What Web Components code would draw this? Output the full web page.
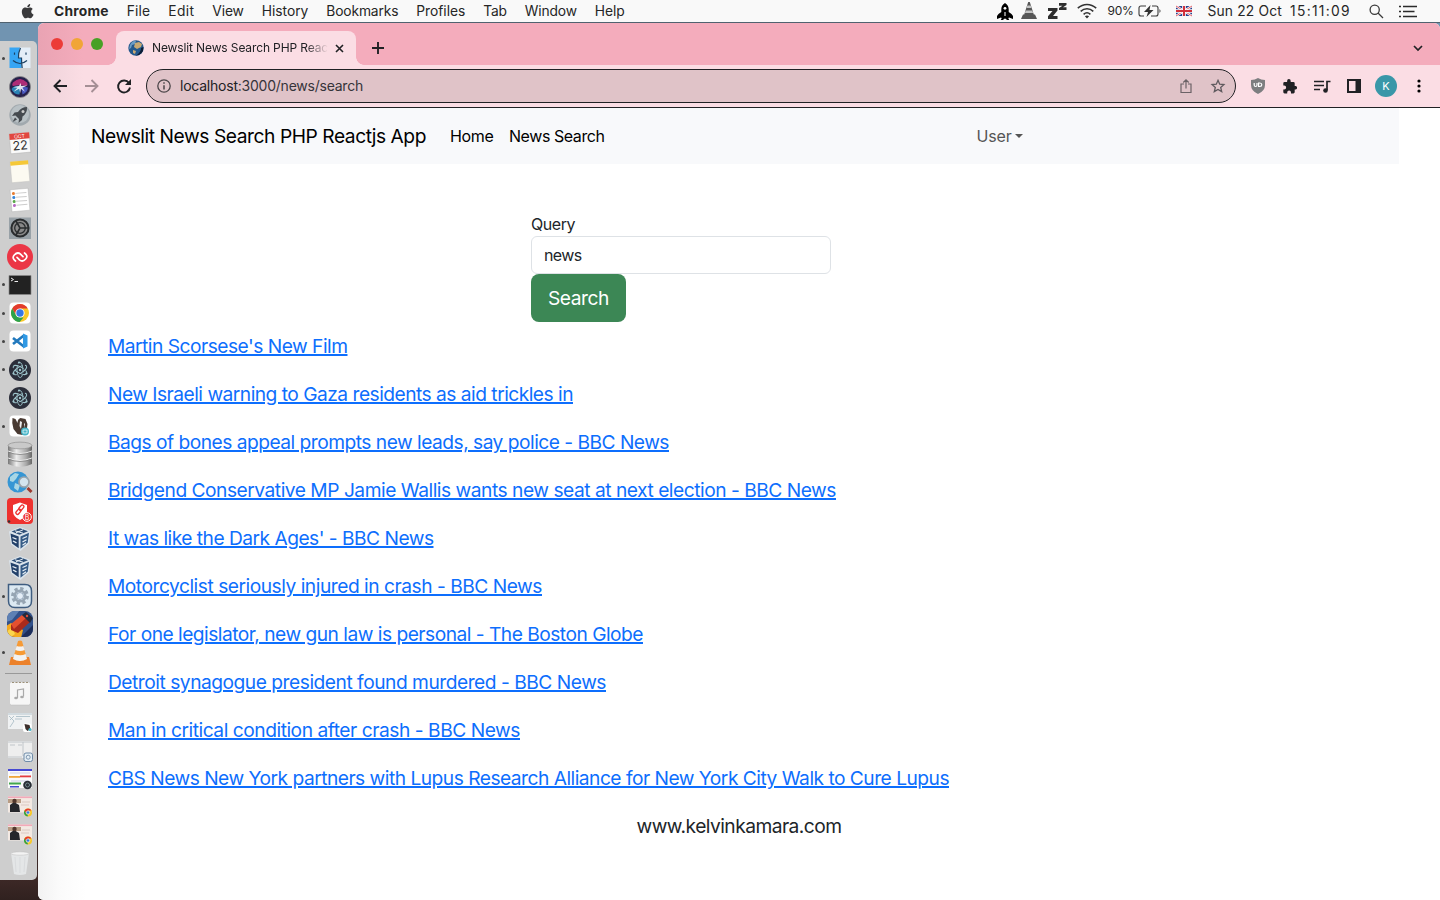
<!DOCTYPE html>
<html lang="en">
<head>
<meta charset="utf-8">
<title>Newslit News Search PHP Reactjs App</title>
<style>
html,body{margin:0;height:100%;overflow:hidden}
body{font-family:Inter,"Liberation Sans",sans-serif;color:#212529;background:#fff}
</style>
</head>
<body>
<desk-top></desk-top>
<script>
const ART = {
 apple:`<path fill="#3a3a3c" d="M11.2 8.5c0-1.7 1.4-2.5 1.5-2.6-.8-1.2-2.1-1.4-2.5-1.4-1.1-.1-2.1.6-2.6.6s-1.400-.6-2.300-.6C4.100 4.500 3 5.200 2.400 6.200c-1.300 2.200-.3 5.500.9 7.300.6.900 1.300 1.900 2.300 1.800.9 0 1.300-.6 2.400-.6s1.400.6 2.400.6 1.600-.9 2.200-1.700c.7-1 1-2 1-2-.1-.1-2.400-.9-2.400-3.100zM9.500 3.400c.5-.6.8-1.500.7-2.400-.7 0-1.600.5-2.100 1.100-.5.500-.9 1.400-.8 2.200.8.100 1.700-.4 2.200-.9z"/>`,
 rocket:`<path fill="#000" d="M8 0C5 1.800 4.300 4 4.300 6.500V9L1.500 11 0 13v3l4-1.500.7.800-1 1.700h2.500l.8-1.300h2l.8 1.300h2.500l-1-1.700.7-.8L16 16v-3l-1.500-2-2.800-2V6.500C11.700 4 11 1.800 8 0z"/><circle cx="8" cy="5.300" r="1.400" fill="#fff"/><rect x="7.400" y="9" width="1.200" height="4" fill="#ddd"/>`,
 cone:`<path fill="#565656" d="M7.200 0h1.600l4 12.500H14l2 4.500H0l2-4.500h1.200z"/><path fill="#c4c4c4" d="M6.300 3.500h3.400l.8 2.500h-5zM4.700 8.500h6.600l.8 2.500H3.900z"/>`,
 zzz:`<path fill="#2e2e2e" d="M0 5h9.500v2.600L5 13h4.500v3H0v-2.700L4.500 8H0zM11 0h7.500v2L15 4.300h3.500V7H11V5l3.500-2.300H11z"/>`,
 wifi:`<g fill="none" stroke="#333" stroke-width="1.600"><path d="M.8 5.200c5.400-5 13-5 18.400 0M3.700 8.300c3.700-3.400 8.900-3.400 12.600 0M6.600 11.300c2-1.800 4.800-1.800 6.800 0"/></g><path fill="#333" d="m7.900 13.300 2.100 2.200 2.100-2.200c-1.200-1-3-1-4.200 0z"/>`,
 battery:`<path d="M8 1H3Q1 1 1 3v6q0 2 2 2h3M14 1h4q2 0 2 2v6q0 2-2 2h-5" fill="none" stroke="#3a3a3a" stroke-width="1.100"/><path d="M12.500 0 6 7h4L8.500 12 15.500 5h-4z" fill="#333"/><path d="M21.500 4q2 2 0 4z" fill="#333"/>`,
 flag:`<path fill="#27408c" d="M0 0h16v10H0z"/><path stroke="#fff" stroke-width="2.200" d="m0 0 16 10M16 0 0 10"/><path stroke="#d8343f" stroke-width=".8" d="m0 0 16 10M16 0 0 10"/><path stroke="#fff" stroke-width="3.600" d="M8 0v10M0 5h16"/><path stroke="#d22f3a" stroke-width="2" d="M8 0v10M0 5h16"/>`,
 search:`<g fill="none" stroke="#3a3a3a" stroke-width="1.300"><circle cx="5.700" cy="5.700" r="4.600"/><path d="m9 9 5 5"/></g>`,
 list:`<path stroke="#2b2b2b" stroke-width="1.700" d="M4 1.500h14M4 6.500h11.500M4 11.500h14M0 1.500h2M0 6.500h2M0 11.500h2"/>`,
 globe:`<circle cx="8" cy="8" r="7.700" fill="#24588c"/><path fill="#6c9cc4" d="M2 5q3-5 6-4l-1 3-3 1-1 3-2 1z"/><path fill="#c8a973" d="m7 3 4-1 3 2-1 3-4 2-3-2zM5 10l3 1-1 3-2-1z"/><path fill="#0c1c34" d="M15.500 7q0 8-8 8.700Q13 13 13 8z"/>`,
 close:`<path d="m1 1 7 7M8 1 1 8" stroke="#202124" stroke-width="1.600"/>`,
 plus:`<path d="M6 0v12M0 6h12" stroke="#202124" stroke-width="1.900"/>`,
 chev:`<path d="m1 1 4 4 4-4" fill="none" stroke="#202124" stroke-width="1.700"/>`,
 back:`<path d="M14 7H1.500M7.500 1l-6 6 6 6" fill="none" stroke="#202124" stroke-width="1.900"/>`,
 fwd:`<path d="M0 7h12.500M6.500 1l6 6-6 6" fill="none" stroke="#a58f95" stroke-width="1.900"/>`,
 reload:`<path d="M12 4A6 6 0 1 0 13 8.500" fill="none" stroke="#202124" stroke-width="1.900"/><path d="M14 0v6H8z" fill="#202124"/>`,
 info:`<circle cx="7" cy="7" r="6.200" fill="none" stroke="#4a4548" stroke-width="1.300"/><path d="M7 6.200v4.300M7 3.300v1.500" stroke="#4a4548" stroke-width="1.500"/>`,
 share:`<path d="M4 5H1v8.500h10V5H8M6 9.500V1M3.300 3.500 6 .9l2.700 2.600" fill="none" stroke="#6b6266" stroke-width="1.200"/>`,
 star:`<path d="m7 1.300 1.700 3.900 4.200.4-3.200 2.800 1 4.200L7 10.400l-3.700 2.200 1-4.200L1.100 5.600l4.200-.4z" fill="none" stroke="#5f5a5e" stroke-width="1.300"/>`,
 shield:`<path fill="#7d7e80" d="M7 0q3 2 7 2v5q0 6-7 9-7-3-7-9V2q4 0 7-2z"/><path d="M3.200 5v2q0 1.500 1.400 1.500T6 7V5M7.600 5v3.500h1.200q2 0 2-1.700T8.800 5z" fill="none" stroke="#fff" stroke-width="1.200"/>`,
 puzzle:`<path fill="#202124" d="M12.700 6.900h-1V4.200q0-1.300-1.300-1.300H7.700v-1a1.800 1.800 0 0 0-3.600 0v1H1.600Q.3 2.900.3 4.200v2.400h.9a1.900 1.900 0 0 1 0 3.900H.3v2.600q0 1.300 1.300 1.300h2.600v-1a1.900 1.900 0 0 1 3.800 0v1h2.400q1.300 0 1.300-1.300v-2.700h1a1.800 1.800 0 0 0 0-3.500z"/>`,
 queue:`<path d="M0 1.500h10M0 5.500h10M0 9.500h6M13 10V1.500h3.500" fill="none" stroke="#202124" stroke-width="1.700"/><circle cx="11.500" cy="10.500" r="2.300" fill="#202124"/>`,
 panel:`<path fill="#202124" fill-rule="evenodd" d="M0 0h14v14H0zM2 2v10h6.500V2z"/>`,
 dots:`<circle cx="2" cy="2" r="1.600"/><circle cx="2" cy="7" r="1.600"/><circle cx="2" cy="12" r="1.600"/>`,
 finder:`<path fill="#36a5f4" d="M3.500 3.500H14L12.500 14h3v10h-12z"/><path fill="#e4eef8" d="M14 3.500h10.500V24H16V14h-3.500z"/><path d="M14.500 4q-2.500 5-2 10h3q0 5 .7 10M7 16.500q7 6 14 0M8.500 8.500v2.200M20 8.500v2.200" fill="none" stroke="#1b4264" stroke-width="1.200"/>`,
 siri:`<circle cx="14" cy="14" r="10.600" fill="#25204b" stroke="#8b8b8b" stroke-width=".8"/><path fill="#c5307f" d="M7 9.500q7-7 14 0 1.500 3-1 3.500l-6-1-7 1q-1.500-1 0-3.500z" opacity=".85"/><path fill="#2b9bd0" d="M5.500 16q3-4 9-3l-1 8.500q-6 0-8-5.500z" opacity=".8"/><path fill="#4857bd" d="m15 13 7 1.500q-.5 5-5.500 7z"/><path d="m14.500 10 .8 3 6-.5-5 2.200 2.700 4-4-2.900-.8 4.200-1-4.200-5.700 3 4-4-4.500-.5 6-1.300z" fill="#fff" opacity=".85"/>`,
 launch:`<circle cx="14" cy="14" r="10.700" fill="#a1a9ae"/><circle cx="14" cy="13" r="9" fill="#b9c1c5"/><path fill="#454a4f" d="M21 6q-5.500 0-9 5l-3.500.5L6 15l3.500-.5L13 18l-.5 4 3.500-3 .5-3.500Q21.500 12 21 6zM9 16.500 6.500 21l4.500-2.500z"/><circle cx="17" cy="10.500" r="1.500" fill="#ccc"/>`,
 cal:`<g transform="rotate(-5 14 14)"><path fill="#fafafa" stroke="#aaa" stroke-width=".4" d="M4 4h20v20H4z"/><path fill="#e1463e" d="M4 4h20v6H4z"/><text x="14" y="9" font-size="5" fill="#fff" text-anchor="middle">OCT</text><text x="14" y="20.800" font-size="12.500" fill="#333" text-anchor="middle">22</text></g>`,
 notes:`<g transform="rotate(-5 14 14)"><path fill="#fcfaf1" stroke="#bbb" stroke-width=".4" d="M5 3h18v21H5z"/><path fill="#f5c837" d="M5 3h18v4H5z"/></g>`,
 remind:`<g transform="rotate(-5 14 14)"><path fill="#fff" stroke="#aaa" stroke-width=".4" d="M5 3h18v22H5z"/><g stroke="#ccc"><path d="M10 7h11M10 11h11M10 15h11M10 19h11"/></g><circle cx="8" cy="7" r="1.500" fill="#e67d32"/><circle cx="8" cy="11" r="1.500" fill="#3585d9"/><circle cx="8" cy="15" r="1.500" fill="#59a84a"/><circle cx="8" cy="19" r="1.500" fill="#b666c2"/></g>`,
 prefs:`<path fill="#98a1a7" d="M3 3.500h22v21.500H3z"/><circle cx="14" cy="14" r="8.600" fill="#888" stroke="#292c2e" stroke-width="2"/><circle cx="14" cy="14" r="5.300" fill="none" stroke="#292c2e" stroke-width="1.300"/><path d="M14 14h8M14 14l-4-7M14 14l-4 7" stroke="#292c2e" stroke-width="1.600"/>`,
 authy:`<circle cx="14" cy="14" r="13" fill="#eb3646"/><path d="M9.500 18Q5.500 15 8.300 12 11.500 8.500 14.500 11.200L17 13.700M18.500 10Q22.500 13 19.700 16 16.500 19.500 13.500 16.800L11 14.300" fill="none" stroke="#fff" stroke-width="1.700" stroke-linecap="round"/>`,
 term:`<path fill="#222" stroke="#888" stroke-width=".7" d="M3 4.500h22v19H3z"/><path d="m5 7 2.500 1.500L5 10M8.500 10.500H12" fill="none" stroke="#eee"/>`,
 chrome:`<rect x="3.500" y="3.500" width="21" height="21" rx="4" fill="#fff"/><circle cx="14" cy="14" r="9" fill="#f8c928"/><path fill="#e33b2e" d="M6.200 9.500a9 9 0 0 1 15.600 0H14l-3.900 6.700z"/><path fill="#2ba24c" d="M6.200 9.500 10.100 16.300 14 18.500h3.500L13.600 23A9 9 0 0 1 6.200 9.500z"/><circle cx="14" cy="14" r="4.600" fill="#fff"/><circle cx="14" cy="14" r="3.700" fill="#3478e5"/>`,
 code:`<rect x="3.500" y="3.500" width="21" height="21" rx="4" fill="#fff"/><path d="m18.500 8-11.500 9M7 11l11.500 9" stroke="#2279bd" stroke-width="2.700"/><path fill="#3099e4" d="m17 6.500 4.500 2v11l-4.500 2z"/>`,
 electron:`<circle cx="14" cy="14" r="11" fill="#2b2e3a"/><g fill="none" stroke="#9ec5cc" stroke-width=".9" stroke-dasharray="13 2.500"><ellipse cx="14" cy="14" rx="7.600" ry="3" transform="rotate(88 14 14)"/><ellipse cx="14" cy="14" rx="7.600" ry="3" transform="rotate(28 14 14)"/><ellipse cx="14" cy="14" rx="7.600" ry="3" transform="rotate(148 14 14)"/></g><g fill="#9ec5cc"><circle cx="14" cy="14" r="1.200"/><circle cx="7.500" cy="17.500" r="1.100"/><circle cx="20.500" cy="17.500" r="1.100"/><circle cx="13" cy="6.500" r="1.100"/></g>`,
 beaver:`<rect x="3.500" y="3.500" width="21" height="21" rx="4" fill="#fff"/><path fill="#493a32" d="m6.500 6 3 1 2 4q0-4 3-5l5 1 2 5-1 8-4 3-5-1-4-5q-2-6-1-11z"/><path fill="#eee" d="m14 9 2 1-1 7-1.500-3zM18 11l1 1-1 4z"/><rect x="15" y="15.500" width="8" height="8" rx="4" fill="#48b5c8"/><path d="M17 18h4v3h-4z" fill="none" stroke="#fff" stroke-width=".7"/>`,
 db:`<linearGradient id="m"><stop stop-color="#777"/><stop offset=".35" stop-color="#eee"/><stop offset=".75" stop-color="#aaa"/><stop offset="1" stop-color="#666"/></linearGradient><path fill="url(#m)" d="M2 4h24v19q-12 6-24 0z"/><ellipse cx="14" cy="4.500" rx="12" ry="3.400" fill="#c9c9c9" stroke="#888" stroke-width=".6"/><path d="M2 10q12 5 24 0M2 17q12 5 24 0" fill="none" stroke="#eee" stroke-width="1"/><path d="M2 11q12 5 24 0M2 18q12 5 24 0" fill="none" stroke="#777" stroke-width=".7"/>`,
 world:`<circle cx="12" cy="13" r="10.500" fill="#3696d4"/><path fill="#a8d6e5" d="m4 8 5-4 4 1-3 5-3 3-3-1zM9 14l5 2-2 6-4-3z"/><path d="m21.500 19 4 4" stroke="#9b392e" stroke-width="3"/><circle cx="18" cy="13" r="5" fill="#d3e4ee" stroke="#9aa4ab" stroke-width="1.700"/>`,
 redbox:`<rect x="1" y="1" width="26" height="26" rx="4" fill="#ee322f"/><path fill="#fff" d="m14 5.500 7 2.500v6q0 6-7 9-7-3-7-9V8z"/><g fill="none" stroke="#ee322f" stroke-width="1.300"><rect x="9.500" y="13.500" width="6" height="3.200" rx="1.600" transform="rotate(-50 12 15)"/><rect x="12.500" y="9.500" width="6" height="3.200" rx="1.600" transform="rotate(-50 15 11)"/></g><circle cx="21" cy="20" r="4.300" fill="#ee322f" stroke="#fff"/><text x="21" y="22.500" font-size="7" fill="#fff" text-anchor="middle">B</text><circle cx="3" cy="24.500" r="1.300" fill="#333"/>`,
 vbox:`<path fill="#dbe4ec" d="M3 6.500 14 2l10.500 4L23 18.500 14.500 26 5 19.500z"/><path fill="#2f5078" d="m5.500 6.600 8.500-3.400 8 3-8.500 3.500z"/><path fill="#23416a" d="m4.500 8.500 8.200 3v11.800L6 18.500z"/><path fill="#355b86" d="m14.500 11.500 8.500-3.700-1.300 10-7.200 6z"/><path d="m9 5.800 8 2.400M17 4.800l-7 3" stroke="#e6eef5" stroke-width="1"/><path d="m6.500 12.500 4 1.700M7 16l3.500 1.800M16.500 13.500l4.500-2M16.500 17l4-2.200M16.500 20.300l3.500-2.500" stroke="#e6eef5" stroke-width="1.300"/>`,
 gear:`<path fill="#dce9f2" stroke="#3f5d80" stroke-width="1.500" d="M2.500 2.500H19q6.500 0 6.500 6.500v10q0 6.500-6.500 6.500H9q-6.500 0-6.500-6.500z"/><circle cx="14" cy="14" r="7.400" fill="none" stroke="#96a5b3" stroke-width="3" stroke-dasharray="3.300 2.500"/><circle cx="14" cy="14" r="5.300" fill="#eef4f8" stroke="#96a5b3" stroke-width="2.600"/><circle cx="14" cy="14" r="3.500" fill="#e4eef7" stroke="#5e7896" stroke-width=".6"/>`,
 flame:`<clipPath id="r"><rect x="1" y="1" width="26" height="26" rx="8"/></clipPath><g clip-path="url(#r)"><path fill="#31508a" d="M0 0h28v28H0z"/><path fill="#5d80b4" d="M0 0h14L6 10 0 12z"/><path fill="#1d2e5a" d="M14 28 28 14v14z"/><path fill="#f5a91e" d="m0 16 5-3 12 7-2 8H0z"/><path fill="#fbd54b" d="m1 21 5-3 3 6-4 3z"/><path fill="#a92a1c" d="M5 15 17 5l7 7-12 11-7-3z"/><path fill="#e4502f" d="M5 14 16 5l4 3L8 19z"/><path fill="#232a3c" d="m16 5 4-3 7 6-3 5z"/><circle cx="21" cy="6" r="1.200" fill="#df4b38"/></g>`,
 vlc:`<path fill="#ec812a" d="m5 18-2 8h22l-2-8z"/><path fill="#f69a35" d="m12 2-5 18q7 4 14 0L16 2q-2-1-4 0z"/><path fill="#f2f2f2" d="m10.700 7-1.400 4q5 2 9.400 0l-1.400-4q-3 1-6.600 0zM8.400 15l-1.400 5q7 4 14 0l-1.400-5q-5 2.500-11.200 0z"/>`,
 music:`<rect x="3.500" y="3" width="21" height="23" rx="2" fill="#f6f6f6" stroke="#bbb" stroke-width=".5"/><path d="M6 3.500h16" stroke="#9c9078" stroke-dasharray="2 1.500"/><path d="M11.500 19v-8l6-1v7.500" fill="none" stroke="#aaa" stroke-width="1.200"/><ellipse cx="10" cy="19" rx="1.800" ry="1.300" fill="#aaa"/><ellipse cx="16" cy="18" rx="1.800" ry="1.300" fill="#aaa"/>`,
 win1:`<path fill="#f0f2f3" d="M2 6h24v16H2z"/><path d="M2 7h24M3 9l5 5-4 6M8 9l-4 4M10 9.500h14M9 12h7" fill="none" stroke="#a5b9c3" stroke-width=".8"/><rect x="17" y="16.500" width="8.500" height="8.500" rx="2" fill="#fff"/><path fill="#3d2f2c" d="m18.500 17 5 1 1 4-3 2-2-2z"/><circle cx="24" cy="22.500" r="1.500" fill="#48b5c8"/>`,
 win2:`<path fill="#eee" d="M2 5h24v17H2z"/><path d="M2 6h24M4 9h5M12 9h4M2 21h14M17 6v14" stroke="#b5bbc0" stroke-width=".8"/><rect x="18" y="17" width="8.500" height="8.500" rx="2" fill="#e4edf3" stroke="#6f8ba8"/><circle cx="22.200" cy="21.200" r="2" fill="none" stroke="#7d96b0"/>`,
 win3:`<path fill="#fafafa" d="M2 5h24v19H2z"/><path fill="#4649d2" d="M2 5h24v2H2zM4 22h9v1.500H4z"/><path d="M4 9h20M5 17h18" stroke="#cdd1e8"/><path fill="#efa73d" d="M3 12h11v1.800H3z"/><path fill="#e33d40" d="M14 11.500h11v1.800H14z"/><path fill="#41a64c" d="M3 18.500h12v2H3z"/><circle cx="21.500" cy="21" r="4.300" fill="#282d35"/><circle cx="21.500" cy="21" r="2" fill="none" stroke="#73888d"/>`,
 win4:`<path fill="#f3e9e3" d="M2 4.500h24v16H2z"/><path fill="#f3a9b9" d="M2 4.500h24v1.600H2z"/><path fill="#b89c84" d="M2 7h13v4H2z"/><path fill="#25262b" d="M4 20v-7l4-3 5 3 1 7z"/><circle cx="8.500" cy="9" r="2.200" fill="#51372d"/><path d="M16 10h8M15 13h8" stroke="#dbc9c2"/><circle cx="22" cy="20.500" r="4" fill="#f8c928"/><path fill="#e33b2e" d="M18.500 18.500a4 4 0 0 1 7 0H22l-1.500 3z"/><path fill="#2ba24c" d="m18.500 18.500 2.200 4h1.300l-.5 2a4 4 0 0 1-3-6z"/><circle cx="22" cy="20.500" r="1.700" fill="#3478e5" stroke="#fff" stroke-width=".6"/>`,
 trash:`<path fill="#e4e6e7" d="m5 4 3 21q6 2 12 0l3-21z"/><path d="m9 8 1 15M14 8v16M19 8l-1 15" stroke="#d9dbdd"/><ellipse cx="14" cy="4.500" rx="9" ry="1.700" fill="#f3f3f3" stroke="#bbb" stroke-width=".5"/>`
};
const component=(name,html,ready)=>customElements.define(name,class extends HTMLElement{
  connectedCallback(){
    if(this.shadowRoot)return;
    const t=document.createElement('template');
    t.innerHTML=typeof html==='function'?html(this):html;
    this.attachShadow({mode:'open'}).append(t.content.cloneNode(true));
    if(ready)ready(this);
  }
});
/* Tracks a line of text out to its set width. */
const track=el=>{
  const w=+el.getAttribute('w'); if(!w)return;
  const n=el.textContent.length, now=el.getBoundingClientRect().width;
  el.style.letterSpacing=((w-now)/n)+'px';
};
component('ui-icon',el=>{const w=el.getAttribute('w'),h=el.getAttribute('h');
 return `<style>:host{display:block;flex:none;width:${w}px;height:${h}px}svg{display:block;overflow:visible}text{font-family:Inter,sans-serif}</style><svg width="${w}" height="${h}" viewBox="0 0 ${w} ${h}">${ART[el.getAttribute('name')]}</svg>`});
component('ui-text','<style>:host{display:block;flex:none;width:max-content;white-space:nowrap}</style><slot></slot>',track);
component('news-link','<style>:host{display:block;width:max-content;white-space:nowrap;height:48px;line-height:48px;font-size:19.2px}a{color:#0d6efd;text-decoration:underline;text-decoration-thickness:1.600px;text-underline-offset:1.400px;text-decoration-skip-ink:auto}</style><a href="#"><slot></slot></a>',track);

const menus=[['File',23.5],['Edit',26],['View',31.500],['History',46.500],['Bookmarks',72],['Profiles',49],['Tab',23.500],['Window',52],['Help',30]];
component('menu-bar',`<style>
:host{display:flex;box-sizing:border-box;height:23px;align-items:center;background:#f9f9f9;border-bottom:1px solid #50626f;padding-left:20px;font-size:13.800px;color:#262626;line-height:22px}
.m{display:flex;gap:18px;margin-left:20px}
.r{display:flex;align-items:center;margin-left:auto;padding-right:23px}
</style><ui-icon name="apple" w="14" h="17"></ui-icon>
<div class="m"><ui-text w="54.800" style="font-weight:700">Chrome</ui-text>${menus.map(([t,w])=>`<ui-text w="${w}">${t}</ui-text>`).join('')}</div>
<div class="r"><ui-icon name="rocket" w="16" h="17"></ui-icon><ui-icon name="cone" w="16" h="18" style="margin-left:8px"></ui-icon><ui-icon name="zzz" w="19" h="17" style="margin-left:11px"></ui-icon><ui-icon name="wifi" w="20" h="16" style="margin-left:10px"></ui-icon>
<ui-text w="26" style="margin-left:11px;font-size:12px">90%</ui-text><ui-icon name="battery" w="23" h="12" style="margin-left:4px"></ui-icon><ui-icon name="flag" w="16" h="10" style="margin-left:15px"></ui-icon>
<ui-text w="74.500" style="margin-left:16px">Sun 22 Oct</ui-text><ui-text w="61" style="margin-left:8px">15:11:09</ui-text><ui-icon name="search" w="14" h="14" style="margin-left:18px"></ui-icon><ui-icon name="list" w="18" h="13" style="margin-left:16px"></ui-icon></div>`);

const apps='finder* siri launch cal notes remind prefs authy term* chrome* code* electron* electron beaver* db world redbox vbox vbox gear* flame vlc*'.split(' ');
const minimised='music win1 win2 win3 win4 win4 trash'.split(' ');
const slot=n=>`<div class="s">${n.endsWith('*')?'<i></i>':''}<ui-icon name="${n.replace('*','')}" w="28" h="28"></ui-icon></div>`;
component('app-dock',`<style>
:host{display:block;box-sizing:border-box;width:37px;height:839px;margin-top:18px;padding-top:3.300px;background:#cecece;border-radius:0 5px 5px 0}
.s{height:28.310px;display:flex;align-items:center;justify-content:flex-end;padding-right:3px}
i{width:3px;height:3px;border-radius:2px;background:#444;margin-right:1px;flex:none}
hr{border:0;height:1px;background:#999;margin:6px 5px 5px}
</style>${apps.map(slot).join('')}<hr>${minimised.map(slot).join('')}`);

component('tab-strip',`<style>
:host{display:flex;height:42px;background:linear-gradient(90deg,#e9a3b3,#f4acbc 45px)}
.l{display:flex;gap:8px;padding:15px 13px 0 13px}.l i{width:12px;height:12px;border-radius:50%;background:#ec3b37}.l i+i{background:#f1a536}.l i+i+i{background:#47a025}
.t{box-sizing:border-box;width:240px;height:34px;margin-top:8px;border-radius:8px 8px 0 0;background:#fbdde4;display:flex;align-items:center;padding:0 12px;font-size:12px;color:#202124;position:relative}
.t:before,.t:after{content:"";position:absolute;bottom:0;width:8px;height:8px;left:-8px;background:radial-gradient(circle at 0 0,transparent 7.500px,#fbdde4 8px)}
.t:after{left:auto;right:-8px;background:radial-gradient(circle at 100% 0,transparent 7.500px,#fbdde4 8px)}
.n{width:176px;margin:-1px 0 0 8px;-webkit-mask:linear-gradient(90deg,#000 154px,transparent)}
</style><div class="l"><i></i><i></i><i></i></div><div class="t"><ui-icon name="globe" w="16" h="16"></ui-icon><div class="n"><ui-text w="176">Newslit News Search PHP Reac</ui-text></div><ui-icon name="close" w="9" h="9" style="margin-left:auto"></ui-icon></div>
<ui-icon name="plus" w="12" h="12" style="margin:19px 0 0 16px"></ui-icon><ui-icon name="chev" w="10" h="6" style="margin:22px 17px 0 auto"></ui-icon>`);

component('tool-bar',`<style>
:host{display:flex;box-sizing:border-box;height:43px;align-items:center;border-bottom:1px solid #202124;background:linear-gradient(90deg,#edd2d9,#fbdde4 45px);padding:0 19.500px 0 15px}
.o{box-sizing:border-box;width:1090px;height:34px;border:1px solid #202124;border-radius:17px;background:#e0c3c8;display:flex;align-items:center;margin-left:14px;padding:0 10px;font-size:14px;line-height:18px;color:#36343a}
.o b{font-weight:400;color:#202124}.o ui-text{margin:-1px 0 0 9px}
.k{width:22px;height:22px;border-radius:50%;background:#3997a8;color:#fff;font-size:11px;line-height:22px;text-align:center;margin-left:14px}
</style><ui-icon name="back" w="14" h="14"></ui-icon><ui-icon name="fwd" w="14" h="14" style="margin-left:18px"></ui-icon><ui-icon name="reload" w="15" h="15" style="margin-left:18px"></ui-icon>
<div class="o"><ui-icon name="info" w="14" h="14"></ui-icon><ui-text w="183"><b>localhost</b>:3000/news/search</ui-text><ui-icon name="share" w="12" h="14" style="margin-left:auto"></ui-icon><ui-icon name="star" w="14" h="14" style="margin-left:19px"></ui-icon></div>
<ui-icon name="shield" w="14" h="16" style="margin-left:15px"></ui-icon><ui-icon name="puzzle" w="15" h="15" style="margin-left:18px"></ui-icon><ui-icon name="queue" w="17" h="13" style="margin-left:16px"></ui-icon><ui-icon name="panel" w="14" h="14" style="margin-left:16px"></ui-icon><div class="k">K</div><ui-icon name="dots" w="4" h="14" style="margin-left:auto"></ui-icon>`);

component('nav-bar',`<style>
:host{display:flex;box-sizing:border-box;height:56px;margin:0 41px;align-items:center;background:#f8f9fb;padding-left:12px;font-size:16px;color:#000;line-height:24px}
.c{border:solid transparent;border-width:4.500px 4px 0;border-top-color:#555;margin:0 0 0 3px}
</style><ui-text w="335" style="font-size:19.2px">Newslit News Search PHP Reactjs App</ui-text><ui-text w="43.500" style="margin-left:24px">Home</ui-text><ui-text w="95.500" style="margin-left:15.500px">News Search</ui-text><ui-text w="35" style="margin-left:372px;color:#555">User</ui-text><span class="c"></span>`);

component('search-form',`<style>
:host{display:block;margin-left:493px;padding-top:48px;font-size:16px;line-height:24px}
.i{box-sizing:border-box;width:300px;height:38px;border:1px solid #dee2e6;border-radius:6px;padding:6px 12px;background:#fff}
button{display:flex;justify-content:center;align-items:center;width:95px;height:48px;border:0;border-radius:8px;background:#3c8755;color:#fff;font:19.2px Inter,sans-serif;padding:0}
</style><ui-text w="44">Query</ui-text><div class="i"><ui-text w="37.500">news</ui-text></div><button><ui-text w="61">Search</ui-text></button>`);

const news=[["Martin Scorsese's New Film",239.5],["New Israeli warning to Gaza residents as aid trickles in",465],["Bags of bones appeal prompts new leads, say police - BBC News",561],["Bridgend Conservative MP Jamie Wallis wants new seat at next election - BBC News",728],["It was like the Dark Ages' - BBC News",325.5],["Motorcyclist seriously injured in crash - BBC News",434],["For one legislator, new gun law is personal - The Boston Globe",535],["Detroit synagogue president found murdered - BBC News",498],["Man in critical condition after crash - BBC News",412],["CBS News New York partners with Lupus Research Alliance for New York City Walk to Cure Lupus",841]];
component('news-list',`<style>:host{display:block;padding-left:70px}</style>${news.map(([t,w])=>`<news-link w="${w}">${t}</news-link>`).join('')}`);
component('site-footer',`<style>:host{display:flex;justify-content:center;height:48px;line-height:48px;font-size:19.2px}</style><ui-text w="205">www.kelvinkamara.com</ui-text>`);

component('browser-window',`<style>
:host{display:block;flex:1;height:877px;border-radius:6px 6px 0 6px;overflow:hidden;background:#fff}
main{height:792px;background:linear-gradient(90deg,#f2f2f2,#fafafa 20px,#fff 48px)}
</style><tab-strip></tab-strip><tool-bar></tool-bar><main><nav-bar></nav-bar><search-form></search-form><news-list></news-list><site-footer></site-footer></main>`);
component('desk-top',`<style>
:host{display:block;width:1440px;height:900px;overflow:hidden;background:linear-gradient(#7194b1 0,#7194b1 50px,#647e94 150px,#65798a 320px,#353944 480px,#30272b 700px,#3c2826 880px,#30211f 900px)}
.d{display:flex;gap:1px;height:877px}
</style><menu-bar></menu-bar><div class="d"><app-dock></app-dock><browser-window></browser-window></div>`);
</script>
</body>
</html>
